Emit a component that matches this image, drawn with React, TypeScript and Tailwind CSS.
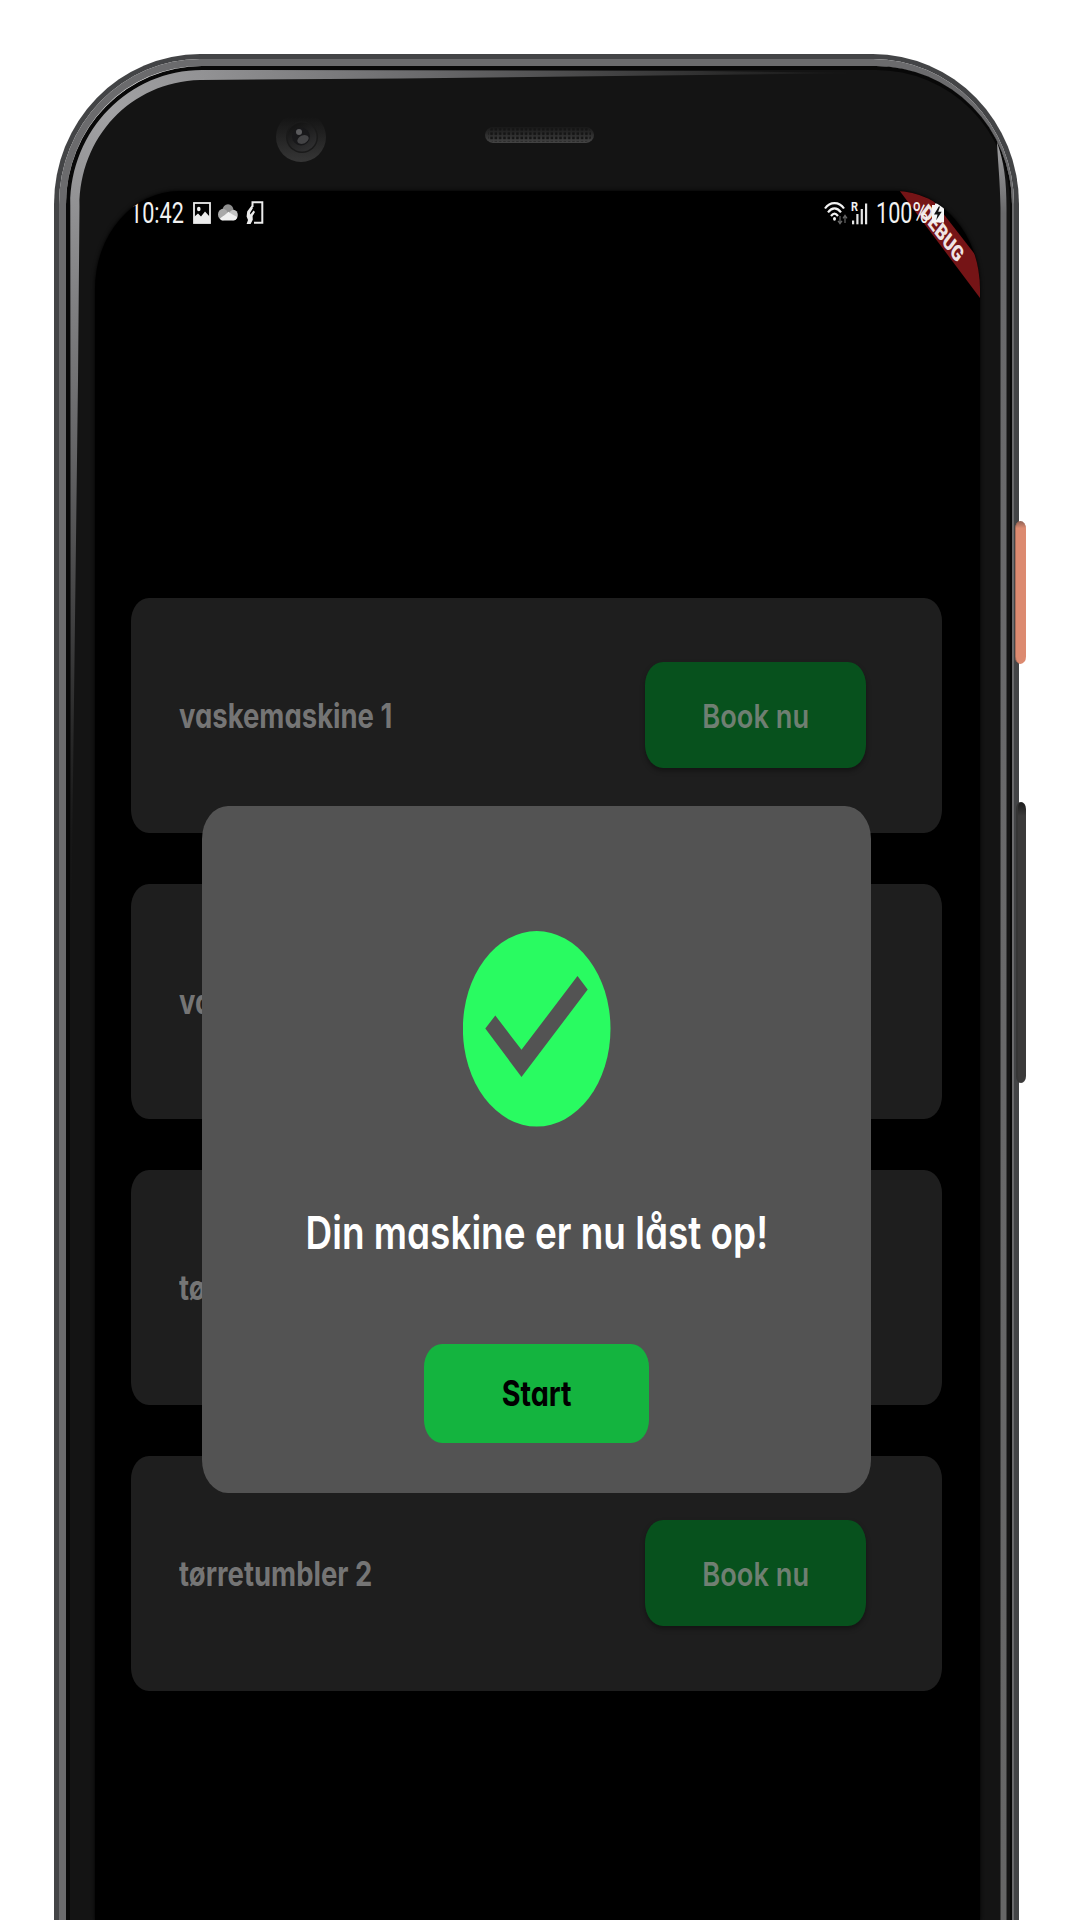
import type { ReactNode } from "react";

const MACHINES = ["vaskemaskine 1", "vaskemaskine 2", "tørretumbler 1", "tørretumbler 2"];

function ImageIcon() {
  return (
    <svg className="h-[22px] w-[18px]" viewBox="0 0 18 22" fill="none">
      <rect x="1" y="1" width="16" height="20" stroke="#ececec" strokeWidth="1.8" />
      <path d="M1 15 L5 11.5 L8 14.5 L12 9.5 L17 15 V21 H1Z" fill="#ececec" />
      <ellipse cx="5.8" cy="7" rx="1.8" ry="2.2" fill="#ececec" />
    </svg>
  );
}

function CloudIcon() {
  return (
    <svg className="h-[18px] w-5" viewBox="0 0 20 18">
      <ellipse cx="10" cy="6.5" rx="5.5" ry="6.2" fill="#8f8f8f" />
      <ellipse cx="5" cy="10.5" rx="5" ry="5.8" fill="#a9a9a9" />
      <ellipse cx="15.5" cy="11" rx="4.3" ry="5.3" fill="#c4c4c4" />
      <path d="M2 14.5 C5 12 8 10.5 10.5 7.8 C13 10 17 12 19.2 13 C18.8 15.5 17 16.5 15 16.5 H5 C3.6 16.5 2.5 16 2 14.5Z" fill="#f0f0f0" />
    </svg>
  );
}

function DeviceIcon() {
  return (
    <svg className="h-[23px] w-[18px]" viewBox="0 0 18 23" fill="none">
      <path d="M6.5 6 V1.2 H16.3 V21.8 H8" stroke="#ececec" strokeWidth="2" />
      <path d="M5.6 4.5 L1.2 10.5 L.6 15.5 L2 19 L.6 23 H4.6 L6.8 18.8 L6.6 15 L9 11 L7.6 9.4 L4.4 13.6 L4 12 L7 7Z" fill="#ececec" />
    </svg>
  );
}

function WifiIcon() {
  return (
    <svg className="h-6 w-6" viewBox="0 0 24 24" fill="none">
      <g stroke="#f2f2f2" strokeWidth="2.2">
        <path d="M1 7.5 C6 .2 15 .2 20 7.5" />
        <path d="M4 11.3 C8 6 13 6 17 11.3" />
        <path d="M7 15 C9.5 11.8 11.5 11.8 14 15" />
      </g>
      <ellipse cx="10.5" cy="17.8" rx="1.5" ry="1.9" fill="#f2f2f2" />
      <g stroke="#666666" strokeWidth="1.2">
        <path d="M16 15 V22.5 M14 19.8 L16 22.6 L18 19.8" />
        <path d="M21 22 V14.5 M19 17.3 L21 14.4 L23 17.3" />
      </g>
    </svg>
  );
}

function SignalIcon() {
  return (
    <svg className="h-6 w-[18px] overflow-visible" viewBox="0 0 18 24">
      <text x="0" y="10.4" fontFamily="Roboto" fontWeight="700" fontSize="13" textLength="7" lengthAdjust="spacingAndGlyphs" fill="#f2f2f2">
        R
      </text>
      <g fill="#e6e6e6">
        <rect x="1" y="19.5" width="2.2" height="3.8" />
        <rect x="5.3" y="13" width="2.2" height="10.3" />
        <rect x="9.7" y="8" width="2.2" height="15.3" />
        <rect x="14" y="2.5" width="2.2" height="20.8" />
      </g>
    </svg>
  );
}

function BatteryIcon() {
  return (
    <svg className="h-[21px] w-3" viewBox="0 0 12 21">
      <path d="M3 1.5 H9 V3 H12 V20.5 H0 V3 H3Z" fill="#f6f6f6" />
      <path d="M6.8 4.5 L2 12.5 H5.5 L4.2 18.3 L9.7 9.8 H6.2 L8 4.5Z" fill="#111" />
    </svg>
  );
}

function StatusBar() {
  return (
    <div className="relative flex h-[43px] items-center justify-between pl-[34.5px] pr-[36px] font-[Roboto,sans-serif] text-[30px] leading-none text-[#f2f2f2]">
      <div className="flex items-center">
        <span className="w-[63px]">
          <span className="inline-block origin-left scale-x-[0.72] whitespace-nowrap">10:42</span>
        </span>
        <ImageIcon />
        <span className="ml-[7px]">
          <CloudIcon />
        </span>
        <span className="ml-2">
          <DeviceIcon />
        </span>
      </div>
      <div className="flex items-center">
        <WifiIcon />
        <span className="ml-[3px]">
          <SignalIcon />
        </span>
        <span className="ml-[7px] w-[56px]">
          <span className="inline-block origin-left scale-x-[0.72] whitespace-nowrap">100%</span>
        </span>
        <BatteryIcon />
      </div>
    </div>
  );
}

function DebugRibbon() {
  return (
    <svg className="absolute right-0 top-0 h-[110px] w-[84px]" viewBox="0 0 84 110">
      <path d="M3 -1 H29 L84 70 V107Z" fill="#751416" />
      <g transform="translate(46.5 42) scale(.757 1) rotate(45)">
        <text x="0" y="7.8" textAnchor="middle" fontFamily="Roboto" fontWeight="900" fontSize="22" fill="#efe4e4">
          DEBUG
        </text>
      </g>
    </svg>
  );
}

function MachineCard({ name }: { name: string }) {
  return (
    <div className="flex h-[234.5px] shrink-0 items-center justify-between rounded-[18px/23px] bg-[#1e1e1e] pl-[48px] pr-[76px]">
      <span className="mt-px origin-left scale-x-[0.808] whitespace-nowrap text-[34px] font-[680] text-[#757575]">{name}</span>
      <button className="flex h-[106px] w-[221.5px] items-center justify-center rounded-[18px/23px] bg-[#07511d] shadow-[0_3px_5px_rgba(0,0,0,0.35)]">
        <span className="mt-[2px] scale-x-[0.825] whitespace-nowrap text-[33px] font-[560] text-[#6f7f72]">Book nu</span>
      </button>
    </div>
  );
}

function UnlockedDialog() {
  return (
    <div className="absolute left-[107px] top-[614.5px] flex h-[687px] w-[669px] flex-col items-center rounded-[26px/33px] bg-[#535353] pt-[125px]">
      <svg className="h-[196px] w-[148px]" viewBox="0 0 148 196">
        <ellipse cx="73.7" cy="97.8" rx="73.8" ry="97.8" fill="#29fb61" />
        <path d="M22.3 97.5 L32.3 84.5 L58.5 118.8 L114.5 45 L124.7 58.5 L58.5 146Z" fill="#535353" />
      </svg>
      <p className="mt-[74px] h-[64px] scale-x-[0.812] whitespace-nowrap text-[45.5px] font-[560] leading-[64px] text-white">
        Din maskine er nu låst op!
      </p>
      <button className="mt-[79.5px] flex h-[99px] w-[225px] items-center justify-center rounded-[18px/23px] bg-[#14b43f]">
        <span className="scale-x-[0.82] text-[35px] font-[680] text-black">Start</span>
      </button>
    </div>
  );
}

function FrontCamera() {
  return (
    <svg className="absolute left-[221px] top-[57px] size-[52px]" viewBox="0 0 52 52">
      <defs>
        <linearGradient id="lens" x1="0" y1="0" x2="0" y2="1">
          <stop offset="0.1" stopColor="#141414" />
          <stop offset="1" stopColor="#363636" />
        </linearGradient>
        <linearGradient id="ring" x1="0" y1="0" x2="0.5" y2="1">
          <stop offset="0.2" stopColor="#151515" />
          <stop offset="1" stopColor="#2e2e2f" />
        </linearGradient>
      </defs>
      <circle cx="26" cy="26" r="25" fill="url(#lens)" />
      <circle cx="27" cy="26" r="16" fill="#1a1a1a" />
      <circle cx="27" cy="26" r="14.5" fill="url(#ring)" />
      <circle cx="26" cy="25.5" r="9" fill="#18181a" />
      <ellipse cx="28" cy="28.5" rx="6" ry="4" fill="#434345" transform="rotate(-25 28 28.5)" />
      <circle cx="24" cy="21" r="3" fill="#5b5b5d" />
    </svg>
  );
}

function Speaker() {
  return (
    <svg className="absolute left-[430.5px] top-[73px] h-[17px] w-[109px]" viewBox="0 0 110 17">
      <defs>
        <pattern id="mesh" width="4.35" height="4.35" patternUnits="userSpaceOnUse">
          <rect x="1" y="1" width="2.6" height="2.6" fill="#151515" />
        </pattern>
        <linearGradient id="grille" x1="0" y1="0" x2="0" y2="1">
          <stop offset="0" stopColor="#191919" />
          <stop offset="1" stopColor="#444444" />
        </linearGradient>
      </defs>
      <rect x="0" y="0" width="110" height="16" rx="8" fill="url(#grille)" />
      <rect x="3" y="1" width="104" height="13.5" rx="5" fill="url(#mesh)" />
    </svg>
  );
}

function Reflections() {
  return (
    <svg className="pointer-events-none absolute left-0 top-0 h-[1866px] w-[965px]" viewBox="54 54 965 1866">
      <defs>
        <radialGradient id="gleam" gradientUnits="userSpaceOnUse" cx="110" cy="110" r="830">
          <stop offset="0" stopColor="#a2a2a4" />
          <stop offset="0.12" stopColor="#929294" />
          <stop offset="0.38" stopColor="#6a6a6c" />
          <stop offset="0.76" stopColor="#282828" />
          <stop offset="0.88" stopColor="#171717" />
          <stop offset="1" stopColor="#141414" />
        </radialGradient>
        <linearGradient id="edge" x1="0" y1="0" x2="0" y2="1">
          <stop offset="0" stopColor="#a0a0a2" />
          <stop offset="0.04" stopColor="#6a6a6c" />
          <stop offset="1" stopColor="#666666" />
        </linearGradient>
      </defs>
      <path
        d="M71 940 L70.3 205 C70.3 130 129 70 202 70 L700 71 L860 73 L400 78.5 L200 80 C130 82 79.5 138 79.5 206 L78 380 Z"
        fill="url(#gleam)"
      />
      <path d="M997 142 C1004 162 1006.5 180 1006.5 208 V1920 H1000.5 V208 C1000 180 998 164 997 142Z" fill="url(#edge)" />
    </svg>
  );
}

function Phone({ children }: { children: ReactNode }) {
  return (
    <div className="relative ml-[54px] mt-[54px] h-[1866px] w-[965px]">
      <div className="h-full rounded-t-[146px_150px] border-x-[5px] border-t-[5px] border-[#434446]">
        <div className="h-full rounded-t-[141px_145px] border-l-[7px] border-r-[2.5px] border-t-[7px] border-[#6b6b6d]">
          <div className="h-full rounded-t-[136px_138px] border-l-[4px] border-r-[2px] border-t-[4px] border-[#080808] bg-[#141414] pl-[25px] pt-[121px]">
            {children}
          </div>
        </div>
      </div>
      <Reflections />
      <FrontCamera />
      <Speaker />
      <div className="absolute left-[961px] top-[467px] h-[143px] w-[11px] rounded-[6px/8px] border-l border-[#a86b58] bg-linear-to-b from-[#8f6154] via-[#dc8a70] via-5% to-[#dc8a70]" />
      <div className="absolute left-[962px] top-[748px] h-[281px] w-[10px] rounded-[5px/7px] border-l-2 border-[#353535] bg-linear-to-b from-[#1c1c1c] via-[#3b3a3a] via-5% to-[#3b3a3a]" />
    </div>
  );
}

export default function App() {
  return (
    <main className="flow-root h-[1920px] w-[1080px] overflow-hidden bg-white font-[Inter,sans-serif] [font-feature-settings:'cv11']">
      <Phone>
        <div className="relative h-[1730px] w-[884.5px] overflow-hidden rounded-t-[84px_98px] bg-black shadow-[0_0_4px_#000]">
          <DebugRibbon />
          <StatusBar />
          <div className="flex flex-col gap-[51.5px] pl-[36px] pr-[37.5px] pt-[364px]">
            {MACHINES.map((name) => (
              <MachineCard key={name} name={name} />
            ))}
          </div>
          <UnlockedDialog />
        </div>
      </Phone>
    </main>
  );
}
